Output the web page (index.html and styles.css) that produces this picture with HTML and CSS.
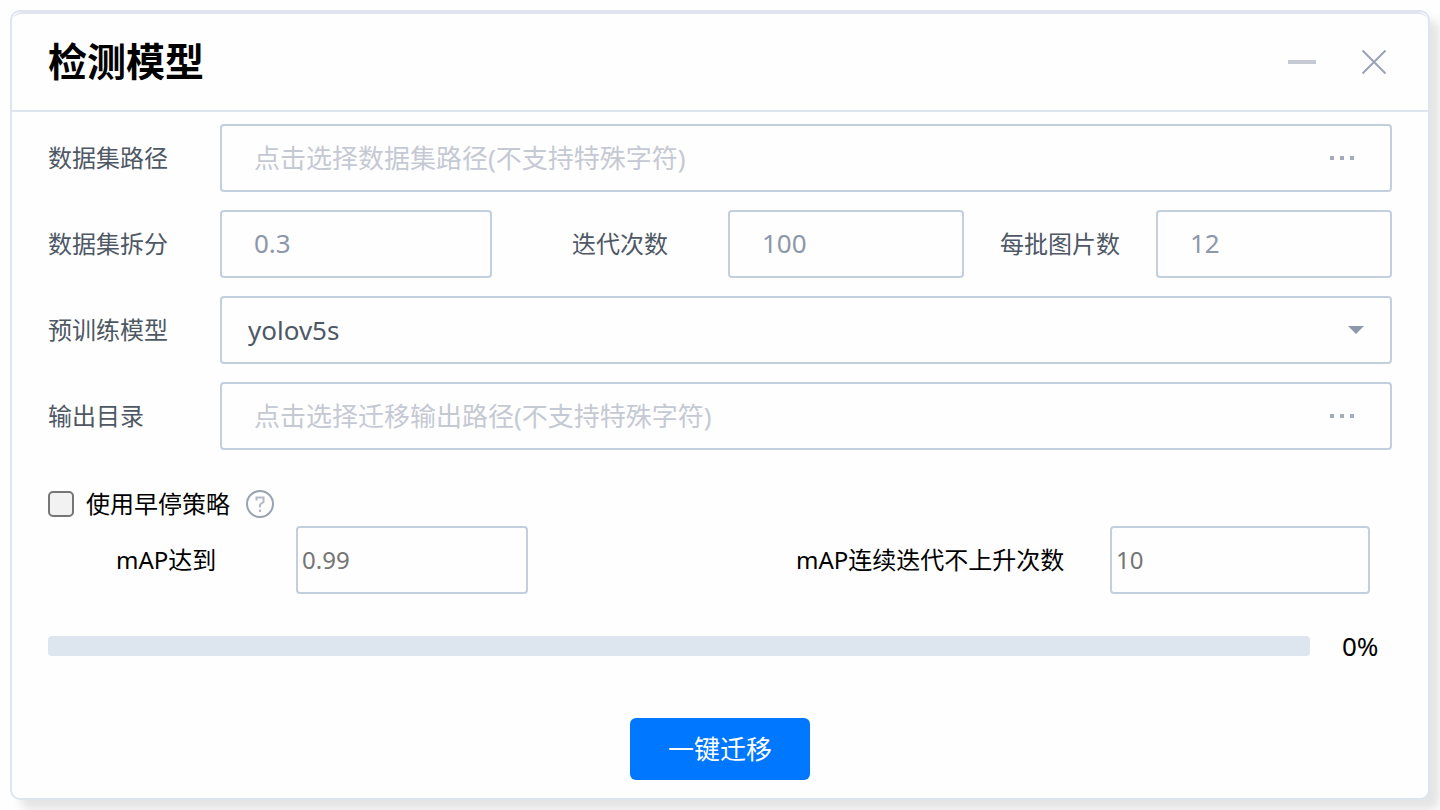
FILE: index.html
```html
<!DOCTYPE html>
<html lang="zh-CN">
  <head>
    <meta charset="UTF-8" />
    <meta name="viewport" content="width=device-width, initial-scale=1.0" />
    <title>检测模型</title>
    <link rel="stylesheet" href="styles.css">
  </head>
  <body>
    <main class="window">
      <header class="header">
        <h1>检测模型</h1>
        <div class="window-buttons">
          <button class="icon-button" type="button" aria-label="最小化">
            <svg width="28" height="28" viewBox="0 0 28 28"><path d="M0 14h28" stroke="#c5c9d3" stroke-width="4" /></svg>
          </button>
          <button class="icon-button" type="button" aria-label="关闭">
            <svg width="28" height="28" viewBox="0 0 28 28"><path d="M2.5 2.5l23 23M25.5 2.5l-23 23" stroke="#9aa3b5" stroke-width="2" /></svg>
          </button>
        </div>
      </header>

      <form class="form">
        <div class="row">
          <label for="dataset">数据集路径</label>
          <div class="field path-field">
            <input type="text" id="dataset" placeholder="点击选择数据集路径(不支持特殊字符)" />
            <button class="icon-button" type="button" aria-label="选择数据集路径">
              <svg width="24" height="4" viewBox="0 0 24 4" fill="#a3abbc"><path d="M0 0h4v4H0zM10 0h4v4h-4zM20 0h4v4h-4z" /></svg>
            </button>
          </div>
        </div>

        <div class="row params">
          <label for="split">数据集拆分</label>
          <input class="field" type="text" id="split" value="0.3" />
          <label class="wide-label" for="epochs">迭代次数</label>
          <input class="field" type="text" id="epochs" value="100" />
          <label class="next-label" for="batch">每批图片数</label>
          <input class="field" type="text" id="batch" value="12" />
        </div>

        <div class="row">
          <label for="model">预训练模型</label>
          <select class="field" id="model">
            <option>yolov5s</option>
          </select>
        </div>

        <div class="row">
          <label for="output">输出目录</label>
          <div class="field path-field">
            <input type="text" id="output" placeholder="点击选择迁移输出路径(不支持特殊字符)" />
            <button class="icon-button" type="button" aria-label="选择输出路径">
              <svg width="24" height="4" viewBox="0 0 24 4" fill="#a3abbc"><path d="M0 0h4v4H0zM10 0h4v4h-4zM20 0h4v4h-4z" /></svg>
            </button>
          </div>
        </div>

        <div class="early-stop">
          <input type="checkbox" id="earlyStop" />
          <label for="earlyStop">使用早停策略</label>
          <button class="icon-button" type="button" aria-label="帮助">
            <svg width="28" height="28" viewBox="0 0 28 28" fill="none" stroke="#9aa3b5" stroke-width="2">
              <circle cx="14" cy="14" r="13" />
              <path d="M10.5 10.5V7.5h7v4.5l-3.5 2.5V17.5M14 19.5v2.5" stroke="#b3bac8" />
            </svg>
          </button>
        </div>

        <div class="stop-params">
          <label for="mapTarget">mAP达到</label>
          <input class="field" type="text" id="mapTarget" placeholder="0.99" />
          <label class="patience-label" for="patience">mAP连续迭代不上升次数</label>
          <input class="field" type="text" id="patience" placeholder="10" />
        </div>

        <div class="progress-row">
          <div class="progress-bar">
            <div class="progress" style="width: 0%"></div>
          </div>
          <span class="progress-text">0%</span>
        </div>

        <button class="submit" type="submit">一键迁移</button>
      </form>
    </main>
  </body>
</html>
```

FILE: styles.css
```css
* {
  box-sizing: border-box;
}
body {
  margin: 0;
  padding: 10px;
  background-color: #fefefe;
  color: #000;
  font-family: "Noto Sans", "Noto Sans CJK SC", sans-serif;
  font-size: 24px;
}
input,
select,
button {
  font-family: inherit;
  font-size: 26px;
}
.window {
  border: 2px solid #dfe5ef;
  border-radius: 10px;
  background-color: #fefefe;
  box-shadow: 10px 10px 10px rgba(0, 0, 0, 0.1);
}
.header {
  display: flex;
  align-items: center;
  justify-content: space-between;
  height: 100px;
  padding: 0 40px 0 36px;
  border-top: 2px solid #dfe5ef;
  border-bottom: 2px solid #dfe5ef;
  border-radius: 10px 10px 0 0;
}
h1 {
  margin: 0;
  padding-bottom: 2px;
  font-size: 39px;
  line-height: 56px;
}
label {
  padding-bottom: 4px;
}
.window-buttons {
  display: flex;
  gap: 44px;
}
.icon-button {
  display: flex;
  padding: 0;
  border: none;
  background: none;
  cursor: pointer;
}
.form {
  display: flex;
  flex-direction: column;
  padding: 12px 36px 18px;
}
.row {
  display: grid;
  grid-template-columns: 172px 1fr;
  align-items: center;
  margin-bottom: 18px;
  color: #4e5865;
}
.params {
  grid-template-columns: 172px 272fr 236px 236fr 192px 236fr;
}
.wide-label {
  padding-left: 80px;
}
.next-label {
  padding-left: 36px;
}
.field {
  width: 100%;
  min-width: 0;
  height: 68px;
  border: 2px solid #c3cede;
  border-radius: 4px;
  background-color: #fefefe;
}
.row input {
  padding: 0 32px;
  color: #8d98aa;
}
.params .field {
  padding-bottom: 2px;
}
.path-field {
  display: flex;
  align-items: center;
  padding-right: 36px;
}
.path-field input {
  flex: 1;
  height: 100%;
  border: none;
  background: none;
}
.path-field input::placeholder {
  color: #c5c9d3;
}
select.field {
  appearance: none;
  padding: 0 26px;
  color: #4e5865;
  background-image: url("data:image/svg+xml,%3Csvg xmlns='http://www.w3.org/2000/svg' width='16' height='8'%3E%3Cpath d='M0 0h16L8 8z' fill='%238d98aa'/%3E%3C/svg%3E");
  background-repeat: no-repeat;
  background-position: right 26px center;
}
.early-stop {
  display: flex;
  align-items: center;
  height: 36px;
  margin-top: 18px;
  margin-bottom: 4px;
}
.early-stop input {
  appearance: none;
  width: 26px;
  height: 26px;
  margin: 0 12px 0 0;
  border: 2px solid #767676;
  border-radius: 5px;
  background-color: #f2f2f2;
}
.early-stop input:checked {
  background-color: #0077ff;
}
.early-stop label {
  margin-right: 16px;
}
.stop-params {
  display: grid;
  grid-template-columns: 180px 232fr 268fr 314px 260fr;
  align-items: center;
  padding: 0 22px 0 68px;
}
.stop-params .field {
  padding: 0 4px 2px;
  font-size: 24px;
}
.stop-params .field::placeholder {
  color: #757575;
}
.patience-label {
  grid-column: 4;
}
.progress-row {
  display: flex;
  align-items: center;
  gap: 32px;
  height: 36px;
  margin-top: 34px;
}
.progress-bar {
  flex: 1;
  height: 20px;
  border-radius: 4px;
  background-color: #dde5ef;
  overflow: hidden;
}
.progress {
  height: 100%;
  background-color: #0077ff;
}
.progress-text {
  width: 50px;
  font-size: 26px;
}
.submit {
  align-self: center;
  width: 180px;
  height: 62px;
  margin-top: 54px;
  padding: 0 0 2px;
  border: none;
  border-radius: 6px;
  background-color: #0077ff;
  color: #fff;
  cursor: pointer;
}
```
